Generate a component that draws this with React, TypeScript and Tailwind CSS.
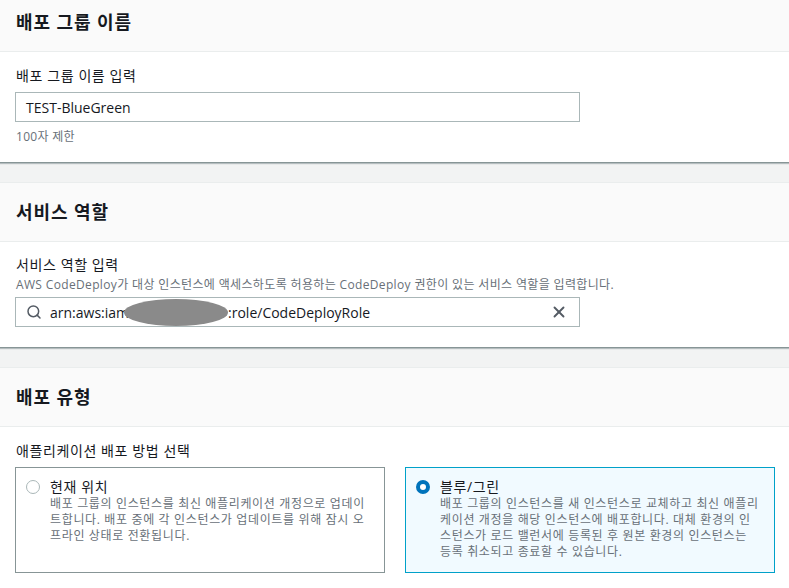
import { Search, X } from "lucide-react"

const font = "font-['Open_Sans','Noto_Sans_CJK_KR',sans-serif]"

function SectionHeader({ title, first }: { title: string; first?: boolean }) {
  return (
    <header
      className={
        first
          ? "border-b border-[#eaeded] bg-[#fafafa] px-4 pt-[8px] pb-[15px]"
          : "flex h-[59px] items-center border-b border-[#eaeded] bg-[#fafafa] px-4"
      }
    >
      <h2 className="text-[18px] leading-[28px] font-bold tracking-[0.9px] text-[#16191f]">
        {title}
      </h2>
    </header>
  )
}

function Radio({ checked }: { checked?: boolean }) {
  return checked ? (
    <span className="mt-[2px] size-[14px] shrink-0 rounded-full border-[4px] border-[#0073bb] bg-white" />
  ) : (
    <span className="mt-[2px] size-[14px] shrink-0 rounded-full border-[1.5px] border-[#aab7b8] bg-white" />
  )
}

function RadioCard({
  title,
  lines,
  checked,
}: {
  title: string
  lines: string[]
  checked?: boolean
}) {
  return (
    <div
      className={
        checked
          ? "flex gap-[10px] border border-[#00a1c9] bg-[#f1faff] px-[10px] pt-[10px] pb-[12px]"
          : "flex gap-[10px] border border-[#879596] bg-white px-[10px] pt-[10px] pb-[12px]"
      }
    >
      <Radio checked={checked} />
      <div className="min-w-0">
        <div className="text-[14px] leading-[18px] tracking-[0.6px] text-[#16191f]">{title}</div>
        <p className="text-[12px] leading-[16px] tracking-[0.65px] whitespace-nowrap text-[#687078]">
          {lines.map((l, i) => (
            <span key={i} className="block">
              {l}
            </span>
          ))}
        </p>
      </div>
    </div>
  )
}

export default function App() {
  return (
    <div className={`${font} flex min-h-screen flex-col gap-[19px] bg-[#f2f3f3]`}>
      <section className="border-b border-[#879596] bg-white shadow-[0_1px_1px_rgba(0,28,36,0.25)]">
        <SectionHeader title="배포 그룹 이름" first />
        <div className="px-4 pt-[14px] pb-[17px]">
          <label className="block text-[14px] leading-[20px] tracking-[0.6px] text-[#16191f]">
            배포 그룹 이름 입력
          </label>
          <div className="mt-[6px] flex h-[30px] w-[565px] -ml-px items-center border border-[#aab7b8] bg-white px-[10px] text-[14px] text-[#16191f]">
            TEST-BlueGreen
          </div>
          <p className="mt-[7px] text-[12px] leading-[16px] tracking-[0.3px] text-[#687078]">100자 제한</p>
        </div>
      </section>

      <section className="border-t border-b border-[#eaeded] border-b-[#879596] bg-white shadow-[0_1px_1px_rgba(0,28,36,0.25)]">
        <SectionHeader title="서비스 역할" />
        <div className="px-4 pt-[13px] pb-[20px]">
          <label className="block text-[14px] leading-[20px] tracking-[0.6px] text-[#16191f]">
            서비스 역할 입력
          </label>
          <p className="mt-[2px] text-[12px] leading-[16px] tracking-[0.35px] text-[#687078]">
            AWS CodeDeploy가 대상 인스턴스에 액세스하도록 허용하는 CodeDeploy 권한이 있는 서비스 역할을 입력합니다.
          </p>
          <div className="mt-[4px] flex h-[30px] w-[565px] -ml-px items-center border border-[#aab7b8] bg-white pr-[10px] pl-[10px] text-[14px] text-[#16191f]">
            <Search className="size-[16px] text-[#545b64]" strokeWidth={2.25} />
            <span className="ml-[8px] flex items-center">
              arn:aws:iam
              <span className="-ml-[5px] inline-block h-[27px] w-[104px] rounded-[50%] bg-[#8a8a8a] blur-[0.6px]" />
              :role/CodeDeployRole
            </span>
            <X className="mr-[1px] ml-auto size-[18px] text-[#545b64]" strokeWidth={2.5} />
          </div>
        </div>
      </section>

      <section className="flex-1 border-t border-[#eaeded] bg-white">
        <SectionHeader title="배포 유형" />
        <div className="px-[15px] pt-[14px] pb-[20px]">
          <label className="block px-px text-[14px] leading-[20px] tracking-[0.6px] text-[#16191f]">
            애플리케이션 배포 방법 선택
          </label>
          <div className="mt-[6px] grid w-[760px] grid-cols-2 gap-[20px]">
            <RadioCard
              title="현재 위치"
              lines={[
                "배포 그룹의 인스턴스를 최신 애플리케이션 개정으로 업데이",
                "트합니다. 배포 중에 각 인스턴스가 업데이트를 위해 잠시 오",
                "프라인 상태로 전환됩니다.",
              ]}
            />
            <RadioCard
              checked
              title="블루/그린"
              lines={[
                "배포 그룹의 인스턴스를 새 인스턴스로 교체하고 최신 애플리",
                "케이션 개정을 해당 인스턴스에 배포합니다. 대체 환경의 인",
                "스턴스가 로드 밸런서에 등록된 후 원본 환경의 인스턴스는",
                "등록 취소되고 종료할 수 있습니다.",
              ]}
            />
          </div>
        </div>
      </section>
    </div>
  )
}
